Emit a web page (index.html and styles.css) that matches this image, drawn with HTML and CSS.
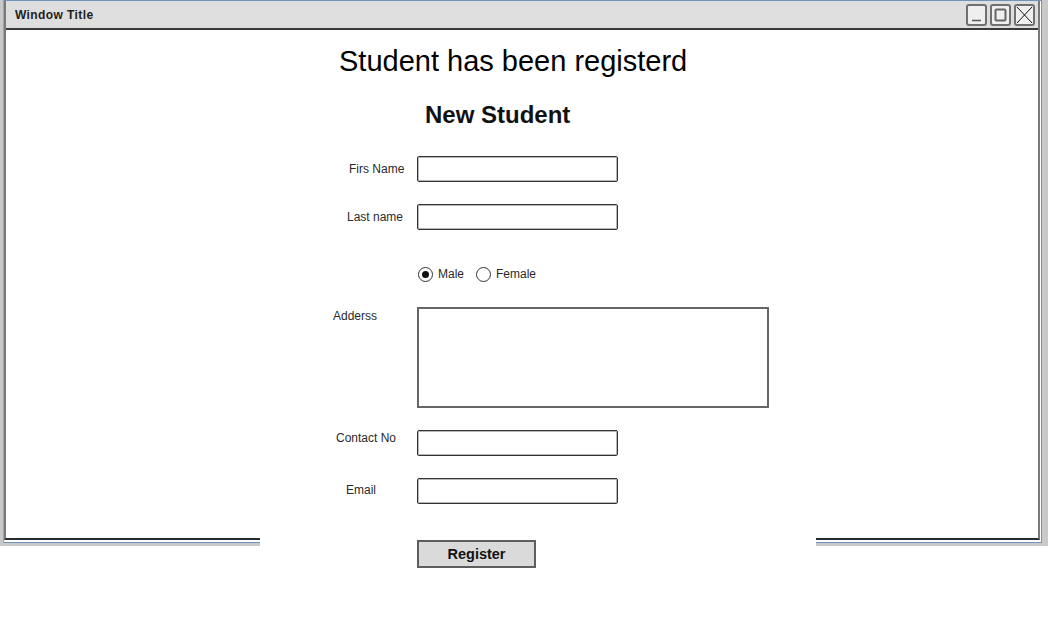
FILE: index.html
```html
<!DOCTYPE html>
<html>
<head>
<meta charset="utf-8">
<title>Student Registration</title>
<link rel="stylesheet" href="styles.css">
</head>
<body>
<div class="window">
  <div class="shell">
    <div class="frame">
      <div class="titlebar">
        <span class="title">Window Title</span>
        <div class="win-btns">
          <span class="win-btn">
            <svg width="17" height="18" viewBox="0 0 17 18"><line x1="4" y1="14.5" x2="13" y2="14.5" stroke="#555" stroke-width="1.5"/></svg>
          </span>
          <span class="win-btn">
            <svg width="17" height="18" viewBox="0 0 17 18"><rect x="3.5" y="3.5" width="10" height="11" fill="none" stroke="#666" stroke-width="2" rx="1"/></svg>
          </span>
          <span class="win-btn">
            <svg width="17" height="18" viewBox="0 0 17 18"><path d="M1 1 L16 17 M16 1 L1 17" stroke="#111" stroke-width="1" fill="none"/></svg>
          </span>
        </div>
      </div>
      <div class="content">
        <h1 class="notice">Student has been registerd</h1>
        <div class="panel">
          <h2 class="form-title">New Student</h2>
          <div class="form">
            <div class="row row-first">
              <label class="lbl lbl-first">Firs Name</label>
              <div class="input"></div>
            </div>
            <div class="row row-gap">
              <label class="lbl lbl-last">Last name</label>
              <div class="input"></div>
            </div>
            <div class="radio-row">
              <span class="radio checked"><span class="dot"></span></span>
              <span class="radio-text">Male</span>
              <span class="radio radio-second"></span>
              <span class="radio-text">Female</span>
            </div>
            <div class="row row-address">
              <label class="lbl lbl-address">Adderss</label>
              <div class="textarea"></div>
            </div>
            <div class="row row-gap">
              <label class="lbl lbl-contact">Contact No</label>
              <div class="input"></div>
            </div>
            <div class="row row-gap">
              <label class="lbl lbl-email">Email</label>
              <div class="input"></div>
            </div>
            <div class="btn-row">
              <button class="btn">Register</button>
            </div>
          </div>
        </div>
      </div>
    </div>
  </div>
</div>
</body>
</html>
```
FILE: styles.css
```css
html, body {
  margin: 0;
  padding: 0;
  background: #fff;
}

body {
  font-family: "Liberation Sans", Arial, sans-serif;
  width: 1048px;
  height: 624px;
  overflow: hidden;
}

.window {
  box-sizing: border-box;
  width: 1048px;
  height: 546px;
  padding: 0 6px 3px 3px;
  background: #c9c9c9;
  display: flex;
  flex-direction: column;
}

.shell {
  flex: 1 1 0;
  min-height: 0;
  display: flex;
  flex-direction: column;
  border: 1px solid #6f93b9;
  border-left-color: #8fa6bd;
  padding: 0 1px 2px 0;
  background: #fff;
}

.frame {
  flex: 1 1 0;
  min-height: 0;
  display: flex;
  flex-direction: column;
  border-left: 2px solid #7a7a7a;
  border-right: 2px solid #7a7a7a;
  border-bottom: 2px solid #2a2a2a;
  background: #fff;
}

.titlebar {
  flex: none;
  height: 27px;
  border-bottom: 2px solid #3a3a3a;
  background: #dedede;
  display: flex;
  align-items: center;
  padding: 0 3px 0 9px;
}

.title {
  font-size: 12px;
  font-weight: bold;
  letter-spacing: 0.4px;
  color: #1e1e1e;
}

.win-btns {
  margin-left: auto;
  display: flex;
  gap: 3px;
  margin-top: 1px;
}

.win-btn {
  box-sizing: border-box;
  width: 21px;
  height: 22px;
  border: 2px solid #707070;
  border-radius: 3px;
  background: #efefef;
  display: flex;
  align-items: center;
  justify-content: center;
}

.win-btn svg {
  display: block;
}

.content {
  flex: none;
  display: flex;
  flex-direction: column;
}

.notice {
  margin: 14px 0 0 0;
  padding-left: 333px;
  font-size: 29px;
  line-height: 34px;
  font-weight: normal;
  color: #000;
}

.panel {
  margin-left: 254px;
  width: 556px;
  background: #fff;
  padding-bottom: 14px;
}

.form-title {
  margin: 23px 0 0 0;
  padding-left: 165px;
  font-size: 24px;
  line-height: 28px;
  font-weight: bold;
  color: #111;
}

.form {
  padding-left: 73px;
  display: flex;
  flex-direction: column;
}

.row {
  display: flex;
  align-items: flex-start;
}

.row-first {
  margin-top: 27px;
}

.row-gap {
  margin-top: 22px;
}

.row-address {
  margin-top: 25px;
}

.lbl {
  box-sizing: border-box;
  width: 84px;
  font-size: 12px;
  line-height: 26px;
  color: #2a2a2a;
}

.lbl-first { padding-left: 16px; }
.lbl-last { padding-left: 14px; }
.lbl-address { padding-left: 0; line-height: 18px; }
.lbl-contact { padding-left: 3px; margin-top: -5px; }
.lbl-email { padding-left: 13px; margin-top: -1px; }

.input {
  box-sizing: border-box;
  width: 201px;
  height: 26px;
  border: 1px solid #333;
  border-radius: 2px;
  box-shadow: inset 0 0 0 1px #b8b8b8;
  background: #fff;
}

.textarea {
  box-sizing: border-box;
  width: 352px;
  height: 101px;
  border: 2px solid #666;
  background: #fff;
}

.radio-row {
  margin-top: 36px;
  height: 16px;
  padding-left: 85px;
  display: flex;
  align-items: center;
}

.radio {
  box-sizing: border-box;
  width: 15px;
  height: 15px;
  border: 1px solid #333;
  border-radius: 50%;
  display: flex;
  align-items: center;
  justify-content: center;
  background: #fff;
}

.radio-second {
  margin-left: 12px;
}

.dot {
  width: 7px;
  height: 7px;
  border-radius: 50%;
  background: #111;
}

.radio-text {
  margin-left: 5px;
  font-size: 12px;
  color: #2a2a2a;
}

.btn-row {
  margin-top: 36px;
  padding-left: 84px;
}

.btn {
  box-sizing: border-box;
  width: 119px;
  height: 28px;
  border: 2px solid #5e5e5e;
  border-radius: 0;
  background: #dadada;
  font-family: "Liberation Sans", Arial, sans-serif;
  font-size: 14.5px;
  font-weight: bold;
  color: #111;
  padding: 0;
  display: block;
}
```
